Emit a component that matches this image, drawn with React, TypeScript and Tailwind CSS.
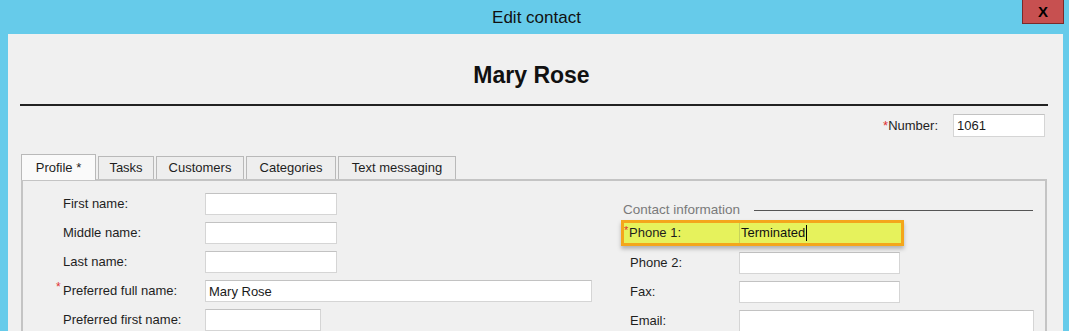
import React from "react";

const font = { fontFamily: '"Segoe UI", Tahoma, "Liberation Sans", sans-serif' };

function Field({ w, value, h = 22 }: { w: number; value?: string; h?: number }) {
  return (
    <div
      className="bg-white border border-[#d5d5d5] border-t-[#c2c2c2] text-[13px] text-[#1a1a1a] px-[3px] flex items-center leading-none"
      style={{ width: w, height: h }}
    >
      {value}
    </div>
  );
}

function Row({ label, req, w, value }: { label: string; req?: boolean; w: number; value?: string }) {
  return (
    <div className="flex items-center h-[22px] mb-[7px]">
      <div className="w-[142px] relative text-[13px] text-[#1e1e1e]">
        {req && <span className="absolute left-[-7px] top-[-3px] text-[#e03030] text-[12px]">*</span>}
        {label}
      </div>
      <Field w={w} value={value} />
    </div>
  );
}

function RRow({ label, w }: { label: string; w: number }) {
  return (
    <div className="flex items-center h-[22px] mb-[7px]">
      <div className="w-[118px] pl-[9px] text-[13px] text-[#1e1e1e]">{label}</div>
      <Field w={w} />
    </div>
  );
}

export default function App() {
  const tabs = [
    { t: "Tasks", w: 56 },
    { t: "Customers", w: 88 },
    { t: "Categories", w: 90 },
    { t: "Text messaging", w: 118 },
  ];
  return (
    <div className="w-[1069px] h-[331px] bg-[#66cbea] overflow-hidden flex flex-col" style={font}>
      <div className="h-[34px] flex relative shrink-0">
        <div className="flex-1 flex justify-center pt-[5px] text-[17px] text-[#111] pl-[4px]">Edit contact</div>
        <div className="absolute right-[5px] top-0 w-[42px] h-[24px] bg-[#c75050] border border-[#7a2a2a] border-t-0 flex items-center justify-center text-[15px] font-bold text-black leading-none">
          X
        </div>
      </div>
      <div className="flex-1 ml-[8px] mr-[6px] bg-[#f0f0f0] flex flex-col">
        <div className="h-[70px] flex items-end justify-center pb-[15px] pr-[8px]">
          <div className="text-[23px] font-bold text-[#111] leading-[28px]">Mary Rose</div>
        </div>
        <div className="ml-[12px] mr-[15px] h-[2px] bg-[#222]"></div>
        <div className="flex justify-end items-center mt-[8px] mr-[18px] h-[23px]">
          <div className="text-[13px] text-[#1e1e1e] mr-[15px]">
            <span className="text-[#e03030]">*</span>Number:
          </div>
          <Field w={92} h={23} value="1061" />
        </div>
        <div className="flex items-end ml-[13px] mt-[17px] h-[25px] relative z-10">
          <div className="h-[26px] w-[75px] bg-[#fafafa] border border-[#b9b9b9] border-b-0 flex items-center justify-center text-[13px] text-[#1e1e1e] mb-[-1px]">
            Profile *
          </div>
          {tabs.map((x) => (
            <div
              key={x.t}
              style={{ width: x.w }}
              className="h-[23px] ml-[2px] bg-[#eeeeee] border border-[#b9b9b9] border-b-0 flex items-center justify-center text-[13px] text-[#1e1e1e]"
            >
              {x.t}
            </div>
          ))}
        </div>
        <div className="ml-[13px] mr-[16px] flex-1 border-2 border-[#c4c4c4] border-b-0 flex">
          <div className="ml-[40px] pt-[12px]">
            <Row label="First name:" w={132} />
            <Row label="Middle name:" w={132} />
            <Row label="Last name:" w={132} />
            <Row label="Preferred full name:" req w={387} value="Mary Rose" />
            <Row label="Preferred first name:" w={116} />
          </div>
          <div className="ml-[29px] pt-[19px] flex-1">
            <div className="flex items-center h-[20px] ml-[2px]">
              <div className="text-[13.5px] text-[#7a7a7a]">Contact information</div>
              <div className="flex-1 h-[1px] bg-[#555] ml-[14px] mr-[12px]"></div>
            </div>
            <div className="w-[283px] h-[26px] border-[3px] border-[#f4a61b] bg-[#e6f25c] shadow-[0_3px_4px_rgba(0,0,0,0.25)] flex items-center relative mb-[6px]">
              <span className="absolute left-[0px] top-[-1px] text-[#e03030] text-[11px]">*</span>
              <div className="w-[115px] pl-[5px] text-[13px] text-[#1e1e1e]">Phone 1:</div>
              <div className="flex-1 h-full border-l border-[#c7d35a] flex items-center pl-[1px] text-[13px] text-[#111]">
                Terminated<span className="inline-block w-[1px] h-[16px] bg-black ml-[1px]"></span>
              </div>
            </div>
            <RRow label="Phone 2:" w={161} />
            <RRow label="Fax:" w={161} />
            <RRow label="Email:" w={295} />
          </div>
        </div>
      </div>
    </div>
  );
}
